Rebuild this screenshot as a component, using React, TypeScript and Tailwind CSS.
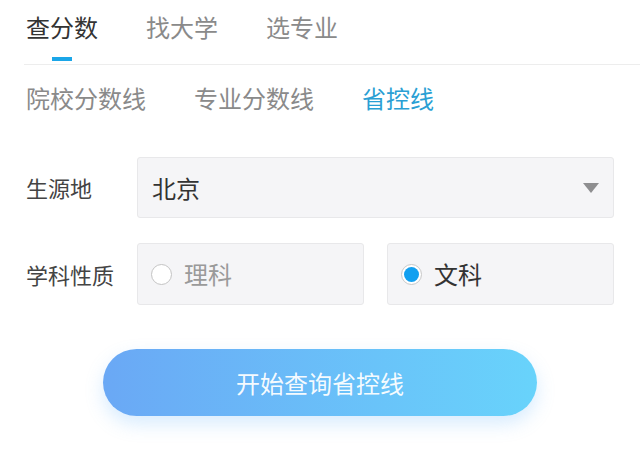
import { useState } from "react";

const font = { fontFamily: '"Noto Sans CJK SC", "Noto Sans", sans-serif' };

export default function App() {
    const [tab, setTab] = useState(0);
    const [sub, setSub] = useState(2);
    const [kind, setKind] = useState("文科");

    const tabs = ["查分数", "找大学", "选专业"];
    const subs = ["院校分数线", "专业分数线", "省控线"];

    return (
        <div className="w-[640px] h-[449px] bg-white overflow-hidden" style={font}>
            {/* Top tabs */}
            <div className="pl-[26px] pt-[10px] flex gap-[48px]">
                {tabs.map((t, i) => (
                    <button
                        key={t}
                        onClick={() => setTab(i)}
                        className={`relative text-[24px] leading-[34px] ${i === tab ? "text-[#333]" : "text-[#8a8a8a]"}`}
                    >
                        {t}
                        {i === tab && (
                            <span className="absolute left-[26px] top-[47px] w-[20px] h-[4px] bg-[#1ba6e8]" />
                        )}
                    </button>
                ))}
            </div>
            <div className="ml-[24px] mt-[20px] h-px bg-[#ededed]" />

            {/* Sub tabs */}
            <div className="pl-[26px] pt-[16px] flex gap-[48px]">
                {subs.map((s, i) => (
                    <button
                        key={s}
                        onClick={() => setSub(i)}
                        className={`text-[24px] leading-[34px] ${i === sub ? "text-[#2a9fd4]" : "text-[#8a8a8a]"}`}
                    >
                        {s}
                    </button>
                ))}
            </div>

            {/* Form */}
            <div className="pl-[26px] pr-[26px] mt-[42px] flex flex-col gap-[25px]">
                <div className="flex items-center">
                    <div className="w-[111px] text-[22px] text-[#444]">生源地</div>
                    <div className="flex-1 h-[61px] bg-[#f5f5f7] border border-[#e8e8ea] rounded-[3px] flex items-center justify-between pl-[14px] pr-[14px]">
                        <span className="text-[24px] text-[#333]">北京</span>
                        <svg width="16" height="10" viewBox="0 0 16 10">
                            <path d="M0 0h16L8 10z" fill="#8e8e90" />
                        </svg>
                    </div>
                </div>
                <div className="flex items-center">
                    <div className="w-[111px] text-[22px] text-[#444]">学科性质</div>
                    <div className="flex-1 grid grid-cols-2 gap-[23px]">
                        {["理科", "文科"].map((k) => {
                            const on = kind === k;
                            return (
                                <button
                                    key={k}
                                    onClick={() => setKind(k)}
                                    className="h-[62px] bg-[#f5f5f7] border border-[#e8e8ea] rounded-[3px] flex items-center pl-[13px] gap-[12px]"
                                >
                                    {on ? (
                                        <span className="w-[21px] h-[21px] rounded-full border border-[#c8c8c8] bg-white flex items-center justify-center">
                                            <span className="w-[15px] h-[15px] rounded-full bg-[#12a0f0]" />
                                        </span>
                                    ) : (
                                        <span className="w-[21px] h-[21px] rounded-full border-[1.5px] border-[#c4c4c4] bg-white" />
                                    )}
                                    <span className={`text-[24px] ${on ? "text-[#333]" : "text-[#9a9a9a]"}`}>{k}</span>
                                </button>
                            );
                        })}
                    </div>
                </div>
            </div>

            {/* Submit */}
            <div className="flex justify-center mt-[44px]">
                <button className="w-[434px] h-[67px] rounded-full bg-gradient-to-r from-[#6aa8f5] to-[#68d3fb] text-white/95 text-[24px] shadow-[0_8px_18px_rgba(100,180,250,0.25)]">
                    开始查询省控线
                </button>
            </div>
        </div>
    );
}
